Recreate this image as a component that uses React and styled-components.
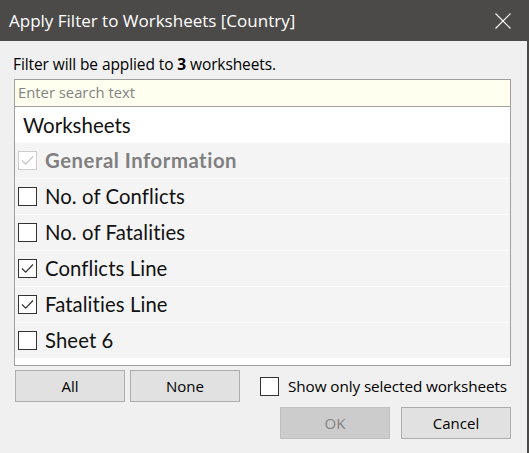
import React, { useState } from 'react';
import styled, { createGlobalStyle } from 'styled-components';

const GlobalStyle = createGlobalStyle`
  html, body {
    margin: 0;
    padding: 0;
    background: #f0f0f0;
  }
`;

const Window = styled.div`
  width: 527px;
  height: 453px;
  border-right: 2px solid #4b4a48;
  background: #f0f0f0;
  font-family: 'Open Sans', 'Liberation Sans', sans-serif;
  overflow: hidden;
`;

const TitleBar = styled.div`
  height: 41px;
  background: #4b4a48;
  color: #ffffff;
  display: flex;
  align-items: center;
  justify-content: space-between;
  padding: 0 16px 0 9px;
  font-size: 17px;
`;

const CloseButton = styled.button`
  width: 16px;
  height: 16px;
  padding: 0;
  border: none;
  background: none;
  display: flex;
  cursor: pointer;
`;

const Body = styled.div`
  padding: 13px 16px 0 14px;
`;

const Message = styled.div`
  font-size: 15.5px;
  color: #000;
  height: 25px;
  line-height: 21px;
  margin-left: -1px;
  letter-spacing: -0.1px;

  b {
    font-weight: 700;
  }
`;

const ListFrame = styled.div`
  border: 1px solid #a0a0a0;
  background: #ffffff;
  padding-bottom: 7px;
`;

const SearchInput = styled.input`
  display: block;
  box-sizing: border-box;
  width: 100%;
  height: 27px;
  border: none;
  border-bottom: 1px solid #a0a0a0;
  background: #fffff0;
  padding: 0 3px 2px;
  font-family: 'Open Sans', 'Liberation Sans', sans-serif;
  font-size: 14.8px;
  outline: none;

  &::placeholder {
    color: #838383;
  }
`;

const ListHeader = styled.div`
  height: 36px;
  display: flex;
  align-items: center;
  padding: 0 0 1px 8px;
  box-sizing: border-box;
  font-family: 'Lato', 'Noto Sans', sans-serif;
  font-size: 20.5px;
  color: #111;
`;

const Rows = styled.div`
  display: flex;
  flex-direction: column;
  gap: 1px;
  background: #fbfbfb;
`;

const Row = styled.label`
  box-sizing: border-box;
  height: 35px;
  display: flex;
  align-items: center;
  gap: 8px;
  padding: 0 0 1px 3px;
  background: #f4f4f4;
  font-family: 'Lato', 'Noto Sans', sans-serif;
  font-size: 20.3px;
  color: ${(p) => (p.$disabled ? '#7f7f7f' : '#111111')};
  font-weight: ${(p) => (p.$disabled ? 700 : 400)};
  letter-spacing: ${(p) => (p.$disabled ? '0.55px' : '0.1px')};
`;

const Box = styled.span`
  box-sizing: border-box;
  width: 19px;
  height: 19px;
  flex: none;
  border: 1px solid ${(p) => (p.$disabled ? '#cccccc' : '#333333')};
  background: #ffffff;
  display: flex;
  align-items: center;
  justify-content: center;
`;

const Controls = styled.div`
  display: flex;
  align-items: center;
  margin-top: 4px;
  margin-left: 1px;
  height: 32px;
`;

const Button = styled.button`
  box-sizing: border-box;
  width: 110px;
  height: 32px;
  margin-right: ${(p) => p.$gap || 0}px;
  border: 1px solid ${(p) => (p.disabled ? '#bfbfbf' : '#adadad')};
  background: ${(p) => (p.disabled ? '#cccccc' : '#e1e1e1')};
  color: ${(p) => (p.disabled ? '#838383' : '#000000')};
  font-family: 'Open Sans', 'Liberation Sans', sans-serif;
  font-size: 15px;
  padding: 0;
`;

const ShowOnly = styled.label`
  display: flex;
  align-items: center;
  gap: 9px;
  margin-left: 20px;
  font-size: 15.3px;
  letter-spacing: -0.1px;
  color: #000;
`;

const Footer = styled.div`
  display: flex;
  justify-content: flex-end;
  gap: 11px;
  margin-top: 5px;
`;

const Check = ({ color }) => (
  <svg width="13" height="11" viewBox="0 0 13 11">
    <polyline points="1,5.5 4.7,9.2 12,1.5" fill="none" stroke={color} strokeWidth="1.2" />
  </svg>
);

const sheets = [
  { name: 'General Information', checked: true, disabled: true },
  { name: 'No. of Conflicts', checked: false },
  { name: 'No. of Fatalities', checked: false },
  { name: 'Conflicts Line', checked: true },
  { name: 'Fatalities Line', checked: true },
  { name: 'Sheet 6', checked: false },
];

export default function App() {
  const [items, setItems] = useState(sheets);
  const [showOnly, setShowOnly] = useState(false);

  const toggle = (i) =>
    setItems((prev) =>
      prev.map((s, j) => (j === i && !s.disabled ? { ...s, checked: !s.checked } : s))
    );

  const count = items.filter((s) => s.checked).length;

  return (
    <>
      <GlobalStyle />
      <Window>
        <TitleBar>
          <span>Apply Filter to Worksheets [Country]</span>
          <CloseButton aria-label="Close">
            <svg width="16" height="16" viewBox="0 0 16 16">
              <path d="M0.5 0.5 L15.5 15.5 M15.5 0.5 L0.5 15.5" stroke="#ffffff" strokeWidth="1.1" />
            </svg>
          </CloseButton>
        </TitleBar>
        <Body>
          <Message>
            Filter will be applied to <b>{count}</b> worksheets.
          </Message>
          <ListFrame>
            <SearchInput placeholder="Enter search text" />
            <ListHeader>Worksheets</ListHeader>
            <Rows>
              {items.map((s, i) => (
                <Row key={s.name} $disabled={s.disabled} onClick={() => toggle(i)}>
                  <Box $disabled={s.disabled}>
                    {s.checked && <Check color={s.disabled ? '#c4c4c4' : '#333333'} />}
                  </Box>
                  {s.name}
                </Row>
              ))}
            </Rows>
          </ListFrame>
          <Controls>
            <Button $gap={5}>All</Button>
            <Button>None</Button>
            <ShowOnly onClick={() => setShowOnly(!showOnly)}>
              <Box>{showOnly && <Check color="#333333" />}</Box>
              Show only selected worksheets
            </ShowOnly>
          </Controls>
          <Footer>
            <Button disabled>OK</Button>
            <Button>Cancel</Button>
          </Footer>
        </Body>
      </Window>
    </>
  );
}
